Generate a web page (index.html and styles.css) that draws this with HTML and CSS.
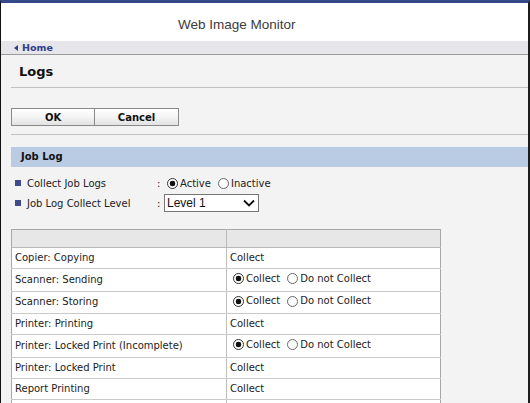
FILE: index.html
```html
<!DOCTYPE html>
<html>
<head>
  <meta name="viewport" content="width=device-width, initial-scale=1.0">
  <link rel="stylesheet" href="styles.css">
</head>
<body>
  <div class="page">
    <div class="header">
      <span class="title">Web Image Monitor</span>
    </div>
    <div class="crumb">
      <a href="#"><svg class="crumb-arrow" width="4" height="6" viewBox="0 0 4 6"><path d="M4 0 L0 3 L4 6 Z" fill="#2d3e8b"/></svg>Home</a>
    </div>

    <div class="content">
      <h1>Logs</h1>
      <div class="rule"></div>

      <div class="buttons">
        <button class="btn btn-ok">OK</button><button class="btn btn-cancel">Cancel</button>
      </div>
      <div class="rule rule-low"></div>

      <h2 class="section">Job Log</h2>
      <div class="settings">
        <div class="setting">
          <span class="bullet"></span>
          <span class="setting-label">Collect Job Logs</span>
          <span class="colon">:</span>
          <label class="opt"><input type="radio" name="collectLogs" checked>Active</label>
          <label class="opt"><input type="radio" name="collectLogs">Inactive</label>
        </div>
        <div class="setting">
          <span class="bullet"></span>
          <span class="setting-label">Job Log Collect Level</span>
          <span class="colon">:</span>
          <div class="select-box">
            <select>
              <option>Level 1</option>
              <option>Level 2</option>
            </select>
            <svg class="chevron" width="12" height="8" viewBox="0 0 12 8"><path d="M1 1.5 L6 6.5 L11 1.5" fill="none" stroke="#111" stroke-width="1.8"/></svg>
          </div>
        </div>
      </div>

      <table class="log-table">
        <tr class="head"><th></th><th></th></tr>
        <tr><td>Copier: Copying</td><td>Collect</td></tr>
        <tr class="choice">
          <td>Scanner: Sending</td>
          <td><label class="opt"><input type="radio" name="scanSend" checked>Collect</label><label class="opt"><input type="radio" name="scanSend">Do not Collect</label></td>
        </tr>
        <tr class="choice">
          <td>Scanner: Storing</td>
          <td><label class="opt"><input type="radio" name="scanStore" checked>Collect</label><label class="opt"><input type="radio" name="scanStore">Do not Collect</label></td>
        </tr>
        <tr><td>Printer: Printing</td><td>Collect</td></tr>
        <tr class="choice">
          <td>Printer: Locked Print (Incomplete)</td>
          <td><label class="opt"><input type="radio" name="lockedInc" checked>Collect</label><label class="opt"><input type="radio" name="lockedInc">Do not Collect</label></td>
        </tr>
        <tr><td>Printer: Locked Print</td><td>Collect</td></tr>
        <tr><td>Report Printing</td><td>Collect</td></tr>
        <tr><td>&nbsp;</td><td>&nbsp;</td></tr>
      </table>
    </div>
  </div>
</body>
</html>
```

FILE: styles.css
```css
* {
  box-sizing: border-box;
  margin: 0;
  padding: 0;
}

body {
  background: #f3f3f3;
  font-family: "DejaVu Sans", Verdana, sans-serif;
  font-size: 10px;
  color: #222;
}

.page {
  width: 530px;
  height: 403px;
  overflow: hidden;
  background: #f3f3f3;
  border-top: 3px solid #36498a;
  border-left: 1px solid #111;
  border-right: 2px solid #1c1c1c;
}

/* top banner */
.header {
  height: 38px;
  padding: 5px 0 0 177px;
  display: flex;
  align-items: center;
  background: #fff;
}

.title {
  font-family: "Liberation Sans", Arial, sans-serif;
  font-size: 13.5px;
  color: #3c3c3c;
}

.crumb {
  height: 14px;
  padding-left: 13px;
  background: #e5e5ea;
  border-bottom: 1px solid #9a9a9a;
  line-height: 13px;
}

.crumb a {
  color: #2d3e8b;
  font-weight: bold;
  font-size: 9.5px;
  text-decoration: none;
}

.crumb-arrow {
  margin-right: 4px;
  vertical-align: 0;
}

.content {
  padding-left: 10px;
}

h1 {
  font-size: 13px;
  font-weight: bold;
  line-height: 16px;
  color: #111;
  margin-top: 9px;
  margin-bottom: 7px;
  padding-left: 8px;
}

.rule {
  height: 1px;
  background: #c2c2c2;
}

.rule-low {
  margin-top: 8px;
}

.buttons {
  display: flex;
  margin-top: 20px;
}

.btn {
  height: 18px;
  font-family: "DejaVu Sans", Verdana, sans-serif;
  font-size: 10px;
  font-weight: bold;
  color: #111;
  border: 1px solid #8a8a8a;
  background: linear-gradient(#ffffff, #f6f6f6 45%, #e2e2e2);
}

.btn-ok {
  width: 84px;
}

.btn-cancel {
  width: 85px;
  margin-left: -1px;
}

.section {
  margin-top: 12px;
  height: 20px;
  line-height: 20px;
  padding-left: 10px;
  background: #b9cce4;
  font-size: 10px;
  font-weight: bold;
  color: #111;
}

.settings {
  margin-top: 6px;
}

.setting {
  display: flex;
  align-items: center;
  height: 20px;
}

.bullet {
  width: 6px;
  height: 6px;
  margin: 0 6px 0 4px;
  background: #3f4b8c;
}

.setting-label {
  width: 130px;
}

.colon {
  width: 4px;
  margin-right: 3px;
}

.opt {
  display: inline-flex;
  align-items: center;
}

.opt + .opt {
  margin-left: 4px;
}

input[type="radio"] {
  appearance: none;
  -webkit-appearance: none;
  width: 11px;
  height: 11px;
  margin: 0 2px 0 3px;
  border: 1px solid #6a6a6a;
  border-radius: 50%;
  background: #fff;
}

input[type="radio"]:checked {
  border-color: #333;
  background: radial-gradient(circle, #111 0 2.6px, #fff 3.1px);
}

.select-box {
  display: flex;
  align-items: center;
  width: 95px;
  height: 18px;
  border: 1px solid #767676;
  background: #fff;
}

.select-box select {
  flex: 1;
  appearance: none;
  -webkit-appearance: none;
  border: none;
  background: transparent;
  padding-left: 2px;
  font-family: "Liberation Sans", Arial, sans-serif;
  font-size: 12px;
  color: #111;
  outline: none;
}

.chevron {
  margin-right: 3px;
}

/* log table */
.log-table {
  margin-top: 16px;
  width: 430px;
  border-collapse: collapse;
  border: 1px solid #a8a8a8;
  background: #fff;
}

.log-table th {
  height: 18px;
  background: #e7e7e7;
  border-bottom: 1px solid #b8b8b8;
}

.log-table td,
.log-table th {
  padding: 0 3px;
  text-align: left;
  font-weight: normal;
}

.log-table td:first-child,
.log-table th:first-child {
  width: 215px;
  border-right: 1px solid #bdbdbd;
}

.log-table td {
  height: 21px;
  line-height: 18px;
  border-bottom: 1px solid #cacaca;
}

.log-table tr.choice td {
  height: 22.5px;
}
```
